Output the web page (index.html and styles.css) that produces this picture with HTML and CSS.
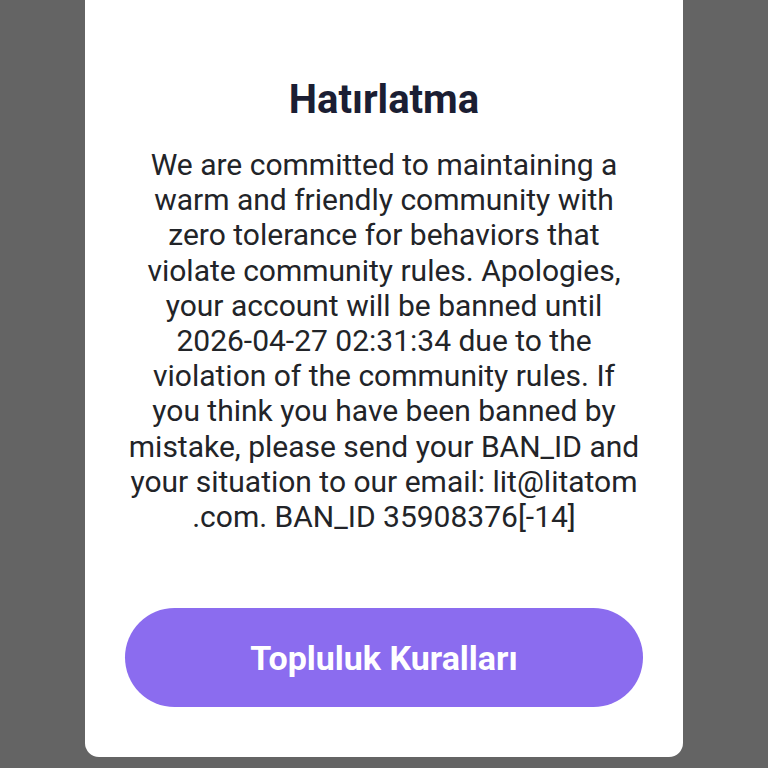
FILE: index.html
```html
<!DOCTYPE html>
<html>
<head>
<meta charset="utf-8">
<link rel="stylesheet" href="styles.css">
</head>
<body>
<div class="screen">
  <div class="card">
    <h1 class="title">Hatırlatma</h1>
    <p class="message">We are committed to maintaining a<br>warm and friendly community with<br>zero tolerance for behaviors that<br>violate community rules. Apologies,<br>your account will be banned until<br>2026-04-27 02:31:34 due to the<br>violation of the community rules. If<br>you think you have been banned by<br>mistake, please send your BAN_ID and<br>your situation to our email: lit@litatom<br>.com. BAN_ID 35908376[-14]</p>
    <button class="action">Topluluk Kuralları</button>
  </div>
</div>
</body>
</html>
```

FILE: styles.css
```css
html, body {
  margin: 0;
  padding: 0;
  background: #646464;
  width: 768px;
  height: 768px;
  overflow: hidden;
}
.screen {
  display: flex;
  justify-content: center;
}
.card {
  margin-top: -30px;
  width: 598px;
  height: 787px;
  box-sizing: border-box;
  background: #ffffff;
  border-radius: 14px;
  padding: 0 40px;
  display: flex;
  flex-direction: column;
  align-items: center;
  font-family: Roboto, "Noto Sans", sans-serif;
}
.title {
  margin: 106px 0 0 0;
  font-size: 40px;
  line-height: 48px;
  font-weight: 700;
  color: #1b1e33;
}
.message {
  margin: 23px 0 0 0;
  font-size: 30px;
  line-height: 35.2px;
  color: #222428;
  text-align: center;
  white-space: nowrap;
}
.action {
  margin-top: 74px;
  width: 518px;
  height: 99px;
  border: none;
  border-radius: 50px;
  background: #8b6cef;
  color: #ffffff;
  font-family: Roboto, "Noto Sans", sans-serif;
  font-size: 34px;
  font-weight: 700;
  padding: 0;
}
```
